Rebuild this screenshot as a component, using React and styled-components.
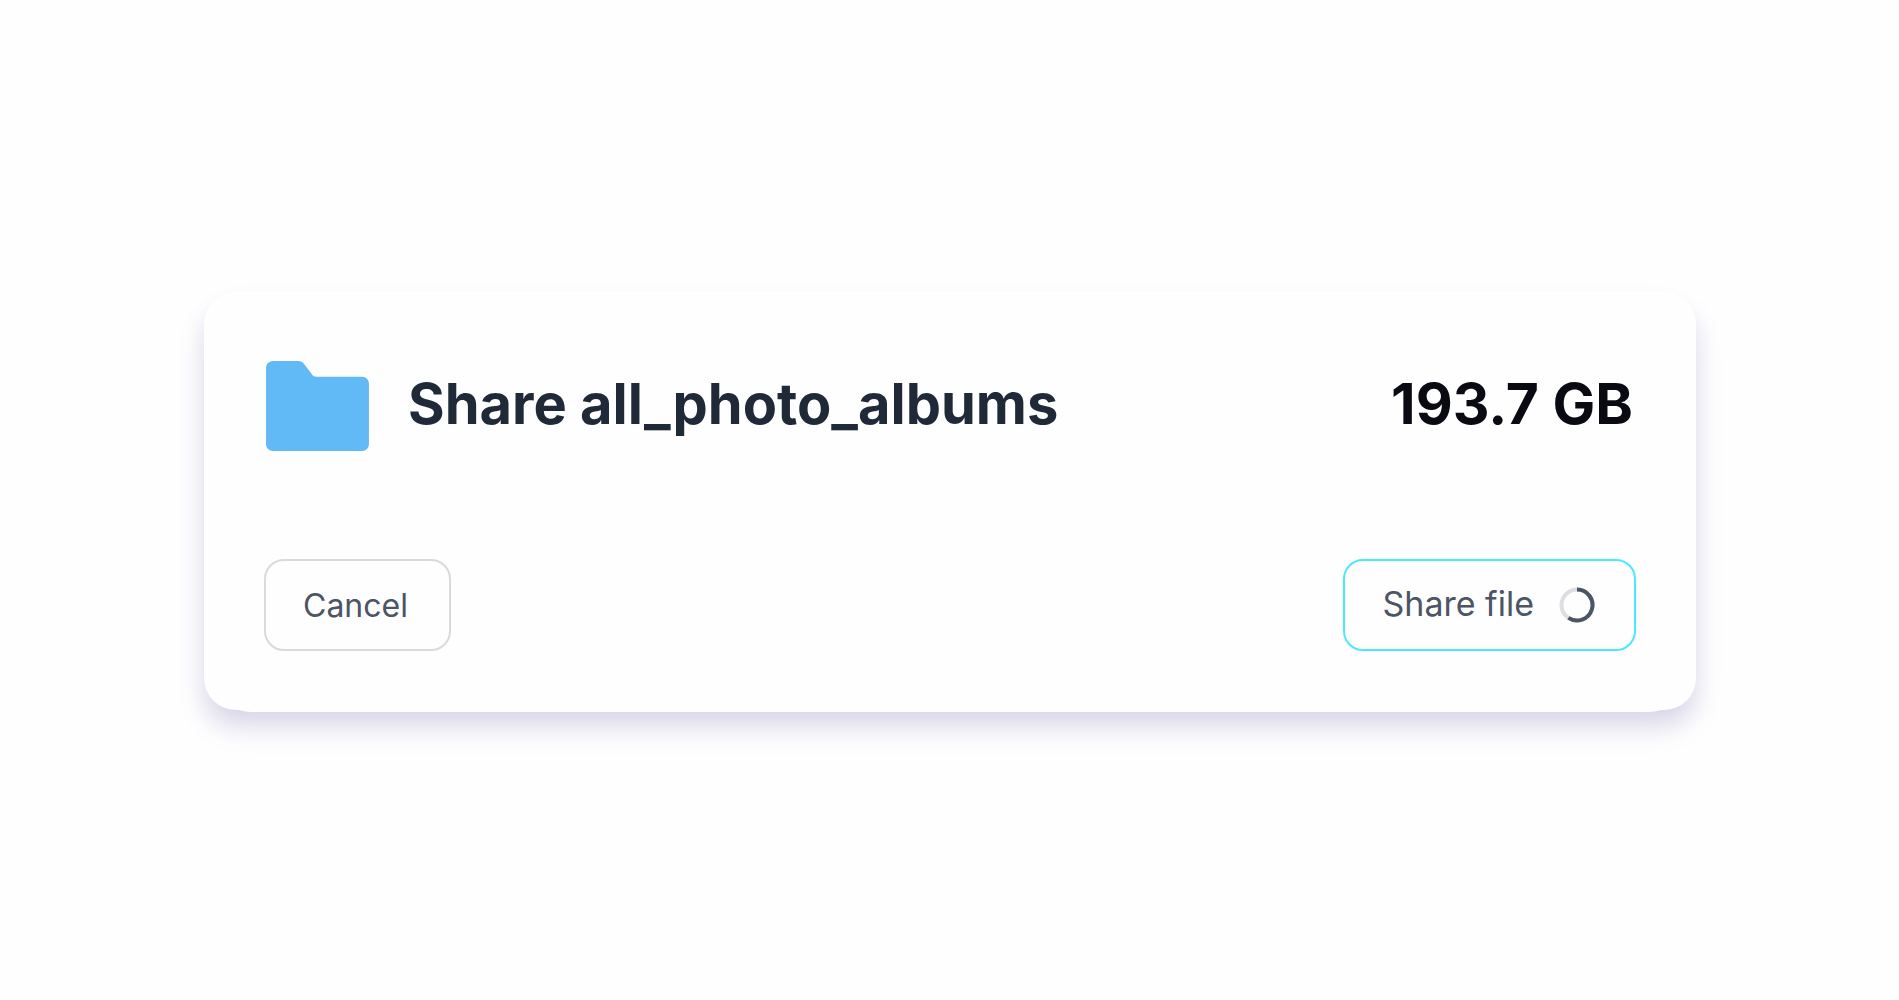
import React from "react";
import styled, { createGlobalStyle } from "styled-components";

const file = { name: "all_photo_albums", size: "193.7 GB" };

export default function App() {
    return (
        <>
            <GlobalStyle />
            <Page>
                <Card>
                    <Header>
                        <FolderIcon />
                        <Title>Share {file.name}</Title>
                        <Size>{file.size}</Size>
                    </Header>
                    <Actions>
                        <Button type="button">Cancel</Button>
                        <ShareButton type="button">
                            <span>Share file</span>
                            <Spinner />
                        </ShareButton>
                    </Actions>
                </Card>
            </Page>
        </>
    );
}

const FolderIcon = () => (
    <Folder viewBox="0 0 104 91" aria-hidden="true">
        <path
            d="M7 0H32.500C35.200 0 36.800 0.800 38.300 2.800L46.300 13.500C47.600 15.300 49 16 51 16H97C101 16 104 19 104 23V84C104 88 101 91 97 91H7C3 91 0 88 0 84V7C0 3 3 0 7 0Z"
            fill="#61baf6"
        />
    </Folder>
);

const Spinner = () => (
    <SpinnerSvg viewBox="0 0 36 36" fill="none" strokeWidth="4" aria-hidden="true">
        <circle cx="18" cy="18" r="15.500" stroke="#dcdee2" />
        <path d="M18 2.500A15.500 15.500 0 1 1 9.400 30.900" stroke="#4b5563" />
    </SpinnerSvg>
);

const GlobalStyle = createGlobalStyle`
    * {
        box-sizing: border-box;
    }

    body {
        margin: 0;
        background: #fefefe;
        font-family: Inter, "Liberation Sans", sans-serif;
    }
`;

const Page = styled("main")`
    display: flex;
    flex-direction: column;
    justify-content: center;
    min-height: 100vh;
    padding: 2px 203px 0 204px;
`;

const Card = styled("section")`
    position: relative;
    padding: 69px 60px 59px;
    border-radius: 32px;
    background: #fefefe;
    box-shadow: 0 16px 24px -4px #d6d3e6, 0 18px 36px #f3f2f9;

    /* fuller bottom edge between the corners */
    &::before {
        content: "";
        position: absolute;
        z-index: 0;
        inset: auto 0 -2px;
        height: 100px;
        border-radius: 0 0 48px 48px;
        background: #fefefe;
    }
`;

const Header = styled("header")`
    display: flex;
    align-items: flex-start;
    padding: 0 3px 0 2px;
    line-height: 86px;
`;

const Folder = styled("svg")`
    flex: none;
    width: 103px;
    height: 90px;
    margin-right: 39px;
`;

const Title = styled("h1")`
    flex: 1;
    margin: 0;
    color: #1f2937;
    font-size: 56px;
    font-weight: 700;
`;

const Size = styled("strong")`
    color: #0a0a12;
    font-size: 57px;
    font-weight: 700;
`;

const Actions = styled("div")`
    position: relative;
    z-index: 1;
    display: flex;
    justify-content: space-between;
    margin-top: 108px;
`;

const Button = styled("button")`
    display: flex;
    align-items: center;
    height: 92px;
    padding: 0 41px 0 37px;
    border: 2px solid #dcd9d8;
    border-radius: 20px;
    background: transparent;
    color: #4b5563;
    font-family: inherit;
    font-size: 32px;
    font-weight: 400;
    cursor: pointer;
`;

const ShareButton = styled(Button)`
    gap: 25px;
    padding: 0 39px 4px 37px;
    border-color: #4ae9ff;
    font-size: 34px;
`;

const SpinnerSvg = styled("svg")`
    width: 36px;
    height: 36px;
    margin-top: 4px;
`;
